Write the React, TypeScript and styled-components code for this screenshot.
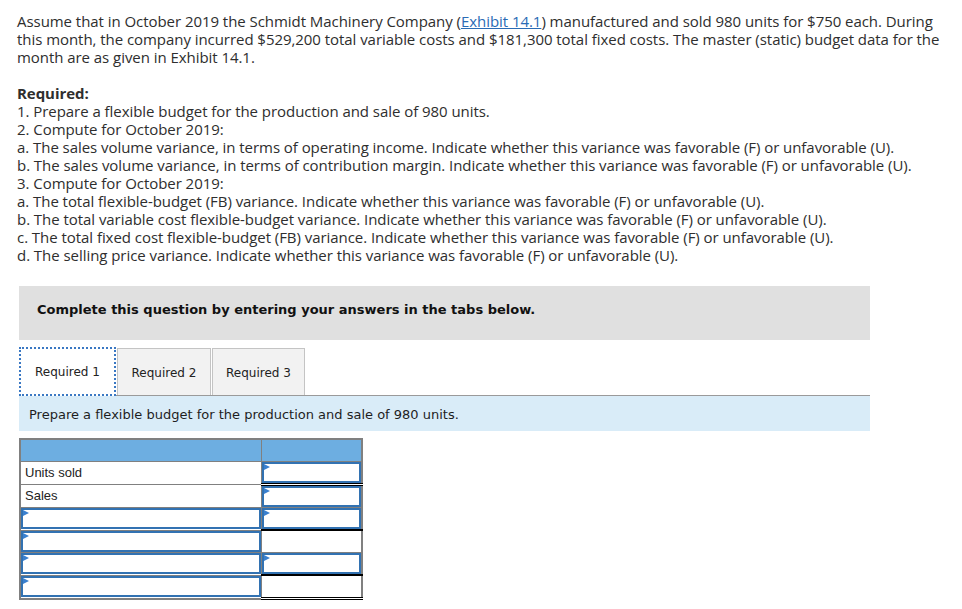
import React from "react";
import styled, { createGlobalStyle } from "styled-components";

const Global = createGlobalStyle`
  html, body { margin: 0; padding: 0; background: #fff; }
  body { width: 962px; }
`;

const Page = styled.div`
  padding: 12px 0 0 17px;
  width: 945px;
  box-sizing: border-box;
`;

const Prose = styled.p`
  margin: 0;
  font-family: "Open Sans", Lato, sans-serif;
  font-size: 15px;
  line-height: 18px;
  letter-spacing: -0.05px;
  color: #2e2e2e;
  white-space: nowrap;
`;

const Intro = styled(Prose)`
  margin-bottom: 18px;
`;

const Link = styled.a`
  color: #2a6bb5;
  text-decoration: underline;
`;

const Strong = styled.b`
  font-weight: 700;
`;

const Content = styled.div`
  margin-left: 2px;
  width: 851px;
`;

const Notice = styled.div`
  margin-top: 22px;
  height: 54px;
  box-sizing: border-box;
  padding: 16px 0 0 18px;
  background: #e0e0e0;
  font-family: Verdana, "DejaVu Sans", sans-serif;
  font-weight: 700;
  font-size: 13px;
  line-height: 16px;
  color: #111;
`;

const TabRow = styled.div`
  margin-top: 6px;
  display: flex;
  align-items: flex-end;
  gap: 1px;
  border-bottom: 1px solid #9a9a9a;
  height: 49px;
`;

const Tab = styled.div<{ $active?: boolean; $w: number }>`
  width: ${(p) => p.$w}px;
  height: ${(p) => (p.$active ? 49 : 47)}px;
  box-sizing: border-box;
  display: flex;
  align-items: center;
  justify-content: center;
  font-family: Verdana, "DejaVu Sans", sans-serif;
  font-size: 12px;
  color: #222;
  background: ${(p) => (p.$active ? "#fff" : "#f2f2f2")};
  border: ${(p) => (p.$active ? "2px dotted #3a78c3" : "1px solid #c4c4c4")};
  border-bottom: ${(p) => (p.$active ? "2px dotted #3a78c3" : "none")};
  margin-bottom: ${(p) => (p.$active ? "-1px" : "0")};
  padding-top: ${(p) => (p.$active ? "0" : "1px")};
`;

const InfoBar = styled.div`
  height: 35px;
  box-sizing: border-box;
  padding: 11px 0 0 10px;
  background: #d9ecf8;
  font-family: Verdana, "DejaVu Sans", sans-serif;
  font-size: 13px;
  line-height: 16px;
  color: #1e1e1e;
`;

const Table = styled.table`
  margin-top: 7px;
  border-collapse: collapse;
  border: 2px solid #808080;
  width: 344px;
`;

const HeadCell = styled.td<{ $w: number }>`
  width: ${(p) => p.$w}px;
  height: 21px;
  background: #6daee1;
  border: 1px solid #808080;
  padding: 0;
`;

const Cell = styled.td<{ $under?: "single" | "double" }>`
  height: 21px;
  padding: 0;
  border: 1px solid #808080;
  border-bottom: ${(p) =>
    p.$under === "double"
      ? "3px double #000"
      : p.$under === "single"
      ? "2px solid #000"
      : "1px solid #808080"};
  vertical-align: top;
`;

const Label = styled.div`
  padding: 2px 4px 0;
  font-family: Arial, "Liberation Sans", sans-serif;
  font-size: 13px;
  line-height: 17px;
  color: #222;
`;

const Field = styled.div<{ $marker?: boolean }>`
  position: relative;
  height: 21px;
  box-sizing: border-box;
  border: 2px solid #3272b2;
  background: #fff;
  &::before {
    content: "";
    display: ${(p) => (p.$marker ? "block" : "none")};
    position: absolute;
    left: 0;
    top: 0;
    width: 0;
    height: 0;
    border-top: 3px solid transparent;
    border-bottom: 3px solid transparent;
    border-left: 6px solid #3a80cf;
  }
`;

const rows: {
  label?: string;
  leftField?: boolean;
  rightField?: boolean;
  under?: "single" | "double";
}[] = [
  { label: "Units sold", rightField: true, under: "double" },
  { label: "Sales", rightField: true },
  { leftField: true, rightField: true, under: "single" },
  { leftField: true },
  { leftField: true, rightField: true, under: "single" },
  { leftField: true, under: "double" },
];

export default function App() {
  return (
    <>
      <Global />
      <Page>
        <Intro>
          Assume that in October 2019 the Schmidt Machinery Company (
          <Link href="#">Exhibit 14.1</Link>) manufactured and sold 980 units for $750 each. During
          <br />
          this month, the company incurred $529,200 total variable costs and $181,300 total fixed
          costs. The master (static) budget data for the
          <br />
          month are as given in Exhibit 14.1.
        </Intro>
        <Prose>
          <Strong>Required:</Strong>
          <br />
          1. Prepare a flexible budget for the production and sale of 980 units.
          <br />
          2. Compute for October 2019:
          <br />
          a. The sales volume variance, in terms of operating income. Indicate whether this variance
          was favorable (F) or unfavorable (U).
          <br />
          b. The sales volume variance, in terms of contribution margin. Indicate whether this
          variance was favorable (F) or unfavorable (U).
          <br />
          3. Compute for October 2019:
          <br />
          a. The total flexible-budget (FB) variance. Indicate whether this variance was favorable
          (F) or unfavorable (U).
          <br />
          b. The total variable cost flexible-budget variance. Indicate whether this variance was
          favorable (F) or unfavorable (U).
          <br />
          c. The total fixed cost flexible-budget (FB) variance. Indicate whether this variance was
          favorable (F) or unfavorable (U).
          <br />
          d. The selling price variance. Indicate whether this variance was favorable (F) or
          unfavorable (U).
        </Prose>
        <Content>
          <Notice>Complete this question by entering your answers in the tabs below.</Notice>
          <TabRow>
            <Tab $active $w={97}>Required 1</Tab>
            <Tab $w={94}>Required 2</Tab>
            <Tab $w={93}>Required 3</Tab>
          </TabRow>
          <InfoBar>Prepare a flexible budget for the production and sale of 980 units.</InfoBar>
          <Table>
            <tbody>
              <tr>
                <HeadCell $w={242} />
                <HeadCell $w={100} />
              </tr>
              {rows.map((r, i) => (
                <tr key={i}>
                  <Cell>
                    {r.label ? <Label>{r.label}</Label> : <Field $marker />}
                  </Cell>
                  <Cell $under={r.under}>{r.rightField ? <Field $marker /> : null}</Cell>
                </tr>
              ))}
            </tbody>
          </Table>
        </Content>
      </Page>
    </>
  );
}
